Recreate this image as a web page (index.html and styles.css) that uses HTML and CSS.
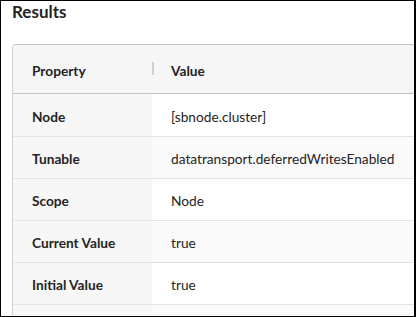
FILE: index.html
```html
<!DOCTYPE html>
<html>
<head>
<meta charset="utf-8">
<link rel="stylesheet" href="styles.css">
</head>
<body>
<div class="frame">
  <h2 class="title">Results</h2>
  <div class="card">
    <div class="row head">
      <div class="cell prop">Property</div>
      <div class="cell val"><span class="sep"></span>Value</div>
    </div>
    <div class="row first">
      <div class="cell prop">Node</div>
      <div class="cell val">[sbnode.cluster]</div>
    </div>
    <div class="row alt">
      <div class="cell prop">Tunable</div>
      <div class="cell val">datatransport.deferredWritesEnabled</div>
    </div>
    <div class="row">
      <div class="cell prop">Scope</div>
      <div class="cell val">Node</div>
    </div>
    <div class="row alt">
      <div class="cell prop">Current Value</div>
      <div class="cell val">true</div>
    </div>
    <div class="row">
      <div class="cell prop">Initial Value</div>
      <div class="cell val">true</div>
    </div>
    <div class="row alt">
      <div class="cell prop"></div>
      <div class="cell val"></div>
    </div>
  </div>
</div>
</body>
</html>
```

FILE: styles.css
```css
html, body {
  margin: 0;
  padding: 0;
  background: #ffffff;
}
.frame {
  width: 416px;
  height: 317px;
  box-sizing: border-box;
  border-style: solid;
  border-color: #000000;
  border-width: 1px 2px 1px 1px;
  overflow: hidden;
  font-family: Lato, "Open Sans", sans-serif;
  color: #242424;
  background: #ffffff;
}
.title {
  margin: 0;
  padding-left: 11px;
  font-size: 17px;
  font-weight: 700;
  line-height: 22px;
  height: 22px;
}
.card {
  margin-top: 21px;
  margin-left: 11px;
  width: 520px;
  border-top: 1px solid #c2c2ca;
  border-left: 1px solid #d1d1d1;
  border-top-left-radius: 4px;
}
.row {
  display: grid;
  grid-template-columns: 139px 1fr;
  height: 41px;
  border-bottom: 1px solid #e3e1ea;
  font-size: 13.7px;
}
.row.first {
  height: 42px;
}
.row.head {
  height: 48px;
  background: #f6f6f6;
  border-bottom: 1px solid #c2c2ca;
  border-top-left-radius: 4px;
}
.cell {
  display: flex;
  align-items: center;
  padding-left: 19px;
  padding-top: 2px;
  box-sizing: border-box;
}
.prop {
  font-weight: 700;
  background: #f7f7f7;
}
.head .prop {
  background: transparent;
}
.val {
  position: relative;
  font-weight: 400;
}
.alt .val {
  background: #fafafa;
}
.sep {
  position: absolute;
  left: 0;
  top: 17px;
  width: 2px;
  height: 13px;
  background: #d1d1d1;
}
.head .val {
  font-weight: 700;
}
```
